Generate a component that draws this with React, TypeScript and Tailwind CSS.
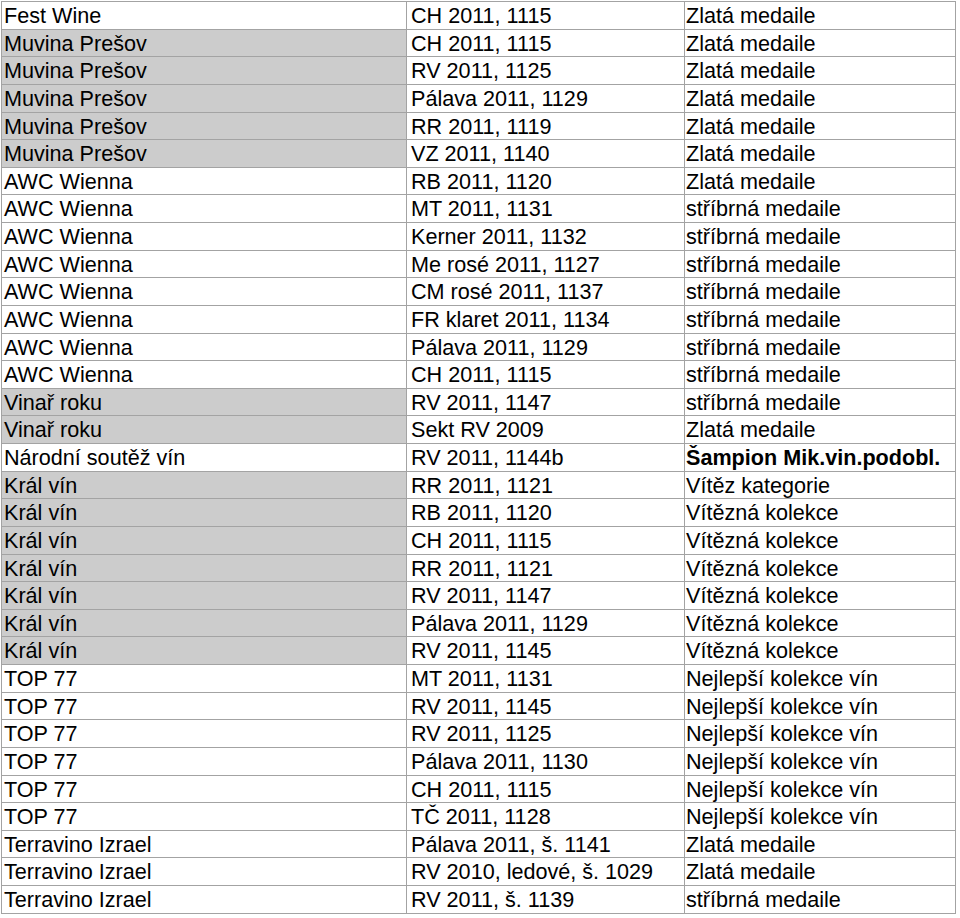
import React from "react";

type Row = [string, string, string, boolean, boolean?];

const rows: Row[] = [
  ["Fest Wine", "CH 2011, 1115", "Zlatá medaile", false],
  ["Muvina Prešov", "CH 2011, 1115", "Zlatá medaile", true],
  ["Muvina Prešov", "RV 2011, 1125", "Zlatá medaile", true],
  ["Muvina Prešov", "Pálava 2011, 1129", "Zlatá medaile", true],
  ["Muvina Prešov", "RR 2011, 1119", "Zlatá medaile", true],
  ["Muvina Prešov", "VZ 2011, 1140", "Zlatá medaile", true],
  ["AWC Wienna", "RB 2011, 1120", "Zlatá medaile", false],
  ["AWC Wienna", "MT 2011, 1131", "stříbrná medaile", false],
  ["AWC Wienna", "Kerner 2011, 1132", "stříbrná medaile", false],
  ["AWC Wienna", "Me rosé 2011, 1127", "stříbrná medaile", false],
  ["AWC Wienna", "CM rosé 2011, 1137", "stříbrná medaile", false],
  ["AWC Wienna", "FR klaret 2011, 1134", "stříbrná medaile", false],
  ["AWC Wienna", "Pálava 2011, 1129", "stříbrná medaile", false],
  ["AWC Wienna", "CH 2011, 1115", "stříbrná medaile", false],
  ["Vinař roku", "RV 2011, 1147", "stříbrná medaile", true],
  ["Vinař roku", "Sekt RV 2009", "Zlatá medaile", true],
  ["Národní soutěž vín", "RV 2011, 1144b", "Šampion Mik.vin.podobl.", false, true],
  ["Král vín", "RR 2011, 1121", "Vítěz kategorie", true],
  ["Král vín", "RB 2011, 1120", "Vítězná kolekce", true],
  ["Král vín", "CH 2011, 1115", "Vítězná kolekce", true],
  ["Král vín", "RR 2011, 1121", "Vítězná kolekce", true],
  ["Král vín", "RV 2011, 1147", "Vítězná kolekce", true],
  ["Král vín", "Pálava 2011, 1129", "Vítězná kolekce", true],
  ["Král vín", "RV 2011, 1145", "Vítězná kolekce", true],
  ["TOP 77", "MT 2011, 1131", "Nejlepší kolekce vín", false],
  ["TOP 77", "RV 2011, 1145", "Nejlepší kolekce vín", false],
  ["TOP 77", "RV 2011, 1125", "Nejlepší kolekce vín", false],
  ["TOP 77", "Pálava 2011, 1130", "Nejlepší kolekce vín", false],
  ["TOP 77", "CH 2011, 1115", "Nejlepší kolekce vín", false],
  ["TOP 77", "TČ 2011, 1128", "Nejlepší kolekce vín", false],
  ["Terravino Izrael", "Pálava 2011, š. 1141", "Zlatá medaile", false],
  ["Terravino Izrael", "RV 2010, ledové, š. 1029", "Zlatá medaile", false],
  ["Terravino Izrael", "RV 2011, š. 1139", "stříbrná medaile", false],
];

export default function App() {
  return (
    <div className="bg-white w-[960px] h-[918px] pt-[1px] pl-[1px]">
      <div
        className="grid grid-cols-[405px_278px_271px] auto-rows-[27.64px] border-l border-t border-[#a3a3a3] text-black text-[21.6px] leading-none whitespace-nowrap"
        style={{ fontFamily: '"Liberation Sans", Arial, sans-serif', width: 955 }}
      >
        {rows.map((r, i) => (
          <React.Fragment key={i}>
            <div
              className={
                "flex items-center pl-[2px] pt-[1px] border-r border-b border-[#a3a3a3] " +
                (r[3] ? "bg-[#cccccc]" : "bg-white")
              }
            >
              {r[0]}
            </div>
            <div className="flex items-center pl-[4px] pt-[1px] border-r border-b border-[#a3a3a3]">
              {r[1]}
            </div>
            <div
              className={
                "flex items-center pl-[1px] pt-[1px] border-r border-b border-[#a3a3a3] " +
                (r[4] ? "font-bold" : "")
              }
            >
              {r[2]}
            </div>
          </React.Fragment>
        ))}
      </div>
    </div>
  );
}
